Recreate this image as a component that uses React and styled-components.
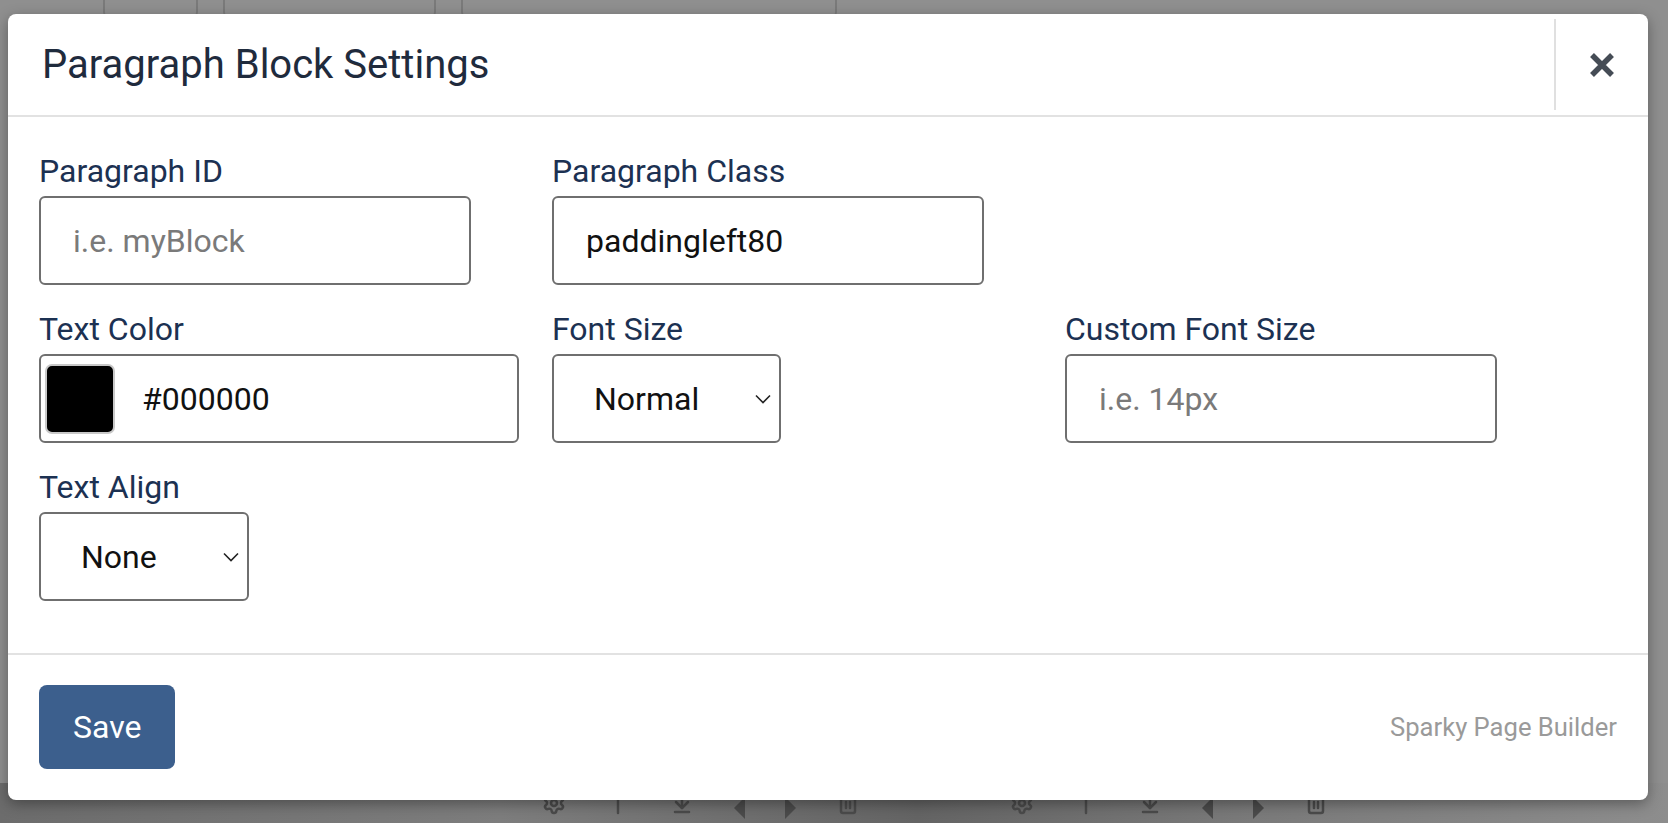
import React from 'react';
import styled, { createGlobalStyle } from 'styled-components';
import { Settings, MoveUp, ArrowDownToLine, Trash2 } from 'lucide-react';

const GlobalStyle = createGlobalStyle`
  html, body {
    margin: 0;
    padding: 0;
    height: 100%;
    overflow: hidden;
    background: #8e8e8e;
    font-family: Roboto, "Liberation Sans", sans-serif;
  }
  #root {
    height: 100%;
  }
`;

const Backdrop = styled.div`
  position: relative;
  width: 100vw;
  height: 100vh;
  background: #8f8f8f;
  overflow: hidden;
`;

const BackTabs = styled.div`
  display: flex;
  gap: 25px;
  padding-left: 103px;
  margin-top: -12px;
`;

const BackTab = styled.div`
  width: ${p => p.w}px;
  height: 30px;
  border: 2px solid #7a7a7a;
  border-radius: 6px;
  box-sizing: border-box;
`;

const BottomBand = styled.div`
  position: absolute;
  left: 0;
  right: 0;
  bottom: 0;
  height: 32px;
  display: flex;
  align-items: flex-start;
  padding: 8px 0 0 542px;
  gap: 150px;
  background: linear-gradient(90deg, #6c6c6c 0%, #7d7d7d 30%, #646464 55%, #7a7a7a 75%, #8d8d8d 100%);
`;

const ToolGroup = styled.div`
  display: flex;
  gap: 40px;
  color: #4b4b4b;
`;

const Caret = styled.span`
  width: 0;
  height: 0;
  border-top: 11px solid transparent;
  border-bottom: 11px solid transparent;
  border-${p => (p.dir === 'left' ? 'right' : 'left')}: 11px solid #4b4b4b;
  margin-top: 6px;
`;

const Modal = styled.div`
  position: absolute;
  left: 8px;
  top: 14px;
  width: 1640px;
  background: #fff;
  border-radius: 8px;
  box-shadow: 0 4px 14px rgba(0, 0, 0, 0.35);
  display: flex;
  flex-direction: column;
`;

const Header = styled.div`
  display: flex;
  align-items: center;
  justify-content: space-between;
  height: 101px;
  border-bottom: 2px solid #e2e2e2;
  padding-left: 34px;
`;

const Title = styled.h1`
  margin: 0;
  font-size: 40px;
  font-weight: 400;
  color: #1f2b3d;
  line-height: 1;
`;

const CloseButton = styled.button`
  width: 94px;
  height: 91px;
  border: none;
  border-left: 2px solid #e0e0e0;
  background: transparent;
  display: flex;
  align-items: center;
  justify-content: center;
  padding: 0;
  cursor: pointer;
`;

const Body = styled.div`
  padding: 36px 31px 52px;
  border-bottom: 2px solid #e2e2e2;
`;

const FieldGrid = styled.div`
  display: grid;
  grid-template-columns: repeat(3, 480px);
  column-gap: 33px;
  row-gap: 26px;
`;

const Field = styled.div`
  display: flex;
  flex-direction: column;
  gap: 6px;
  grid-column: ${p => p.col || 'auto'};
`;

const Label = styled.label`
  font-size: 32px;
  line-height: 37px;
  color: #1c3152;
`;

const TextInput = styled.input`
  box-sizing: border-box;
  width: 432px;
  height: 89px;
  border: 2px solid #6f6f6f;
  border-radius: 6px;
  padding: 0 32px;
  font-family: Roboto, "Liberation Sans", sans-serif;
  font-size: 32px;
  color: #111;
  background: #fff;
  outline: none;

  &::placeholder {
    color: #7a7a7a;
  }
`;

const ColorBox = styled.div`
  box-sizing: border-box;
  width: 480px;
  height: 89px;
  border: 2px solid #6f6f6f;
  border-radius: 6px;
  display: flex;
  align-items: center;
  gap: 27px;
  padding-left: 4px;
`;

const Swatch = styled.div`
  width: 70px;
  height: 70px;
  box-sizing: border-box;
  border-radius: 7px;
  border: 2px solid #c8c8c8;
  background: ${p => p.color};
`;

const ColorValue = styled.span`
  font-size: 32px;
  color: #111;
`;

const SelectWrap = styled.div`
  position: relative;
  width: ${p => p.w}px;
`;

const Select = styled.select`
  appearance: none;
  box-sizing: border-box;
  width: 100%;
  height: 89px;
  border: 2px solid #6f6f6f;
  border-radius: 6px;
  padding: 0 40px;
  font-family: Roboto, "Liberation Sans", sans-serif;
  font-size: 32px;
  color: #111;
  background: #fff;
  outline: none;
`;

const Chevron = styled.svg`
  position: absolute;
  right: 10px;
  top: 40px;
  pointer-events: none;
`;

const Footer = styled.div`
  display: flex;
  align-items: center;
  justify-content: space-between;
  padding: 30px 31px 31px;
`;

const SaveButton = styled.button`
  height: 84px;
  padding: 0 34px;
  border: none;
  border-radius: 8px;
  background: #3c5f8d;
  color: #fff;
  font-family: Roboto, "Liberation Sans", sans-serif;
  font-size: 32px;
  cursor: pointer;
`;

const Credit = styled.span`
  font-size: 25.6px;
  color: #9a9a9a;
`;

const ChevronIcon = () => (
  <Chevron width="16" height="10" viewBox="0 0 16 10">
    <path d="M1 1.5 L8 8.5 L15 1.5" fill="none" stroke="#222" strokeWidth="1.6" />
  </Chevron>
);

const SelectField = ({ w, value, options }) => (
  <SelectWrap w={w}>
    <Select defaultValue={value}>
      {options.map(o => <option key={o}>{o}</option>)}
    </Select>
    <ChevronIcon />
  </SelectWrap>
);

const BlockTools = () => (
  <ToolGroup>
    <Settings size={24} strokeWidth={2.5} />
    <MoveUp size={24} strokeWidth={2.5} />
    <ArrowDownToLine size={24} strokeWidth={2.5} />
    <Caret dir="left" />
    <Caret dir="right" />
    <Trash2 size={24} strokeWidth={2.5} />
  </ToolGroup>
);

export default function App() {
  return (
    <>
      <GlobalStyle />
      <Backdrop>
        <BackTabs>
          <BackTab w={95} />
          <BackTab w={213} />
          <BackTab w={376} />
        </BackTabs>
        <BottomBand>
          <BlockTools />
          <BlockTools />
        </BottomBand>

        <Modal>
          <Header>
            <Title>Paragraph Block Settings</Title>
            <CloseButton aria-label="Close">
              <svg width="26" height="26" viewBox="0 0 26 26">
                <path d="M3 3 L23 23 M23 3 L3 23" stroke="#454c55" strokeWidth="5.5" />
              </svg>
            </CloseButton>
          </Header>

          <Body>
            <FieldGrid>
              <Field>
                <Label>Paragraph ID</Label>
                <TextInput placeholder="i.e. myBlock" />
              </Field>
              <Field>
                <Label>Paragraph Class</Label>
                <TextInput defaultValue="paddingleft80" />
              </Field>
              <Field />

              <Field>
                <Label>Text Color</Label>
                <ColorBox>
                  <Swatch color="#000000" />
                  <ColorValue>#000000</ColorValue>
                </ColorBox>
              </Field>
              <Field>
                <Label>Font Size</Label>
                <SelectField w={229} value="Normal" options={['Normal', 'Small', 'Large', 'Custom']} />
              </Field>
              <Field>
                <Label>Custom Font Size</Label>
                <TextInput placeholder="i.e. 14px" />
              </Field>

              <Field col="1">
                <Label>Text Align</Label>
                <SelectField w={210} value="None" options={['None', 'Left', 'Center', 'Right', 'Justify']} />
              </Field>
            </FieldGrid>
          </Body>

          <Footer>
            <SaveButton>Save</SaveButton>
            <Credit>Sparky Page Builder</Credit>
          </Footer>
        </Modal>
      </Backdrop>
    </>
  );
}
